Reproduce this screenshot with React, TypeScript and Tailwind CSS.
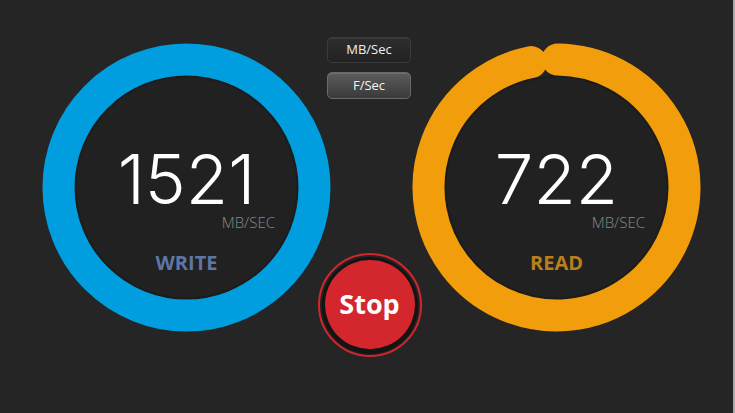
import React from 'react';

type GaugeProps = {
  value: string;
  label: string;
  color: string;
  labelClass: string;
  full?: boolean;
};

const R = 128;
const C = 144.5;

// arc path from angle a0 to a1 (degrees, 0 = top, clockwise)
function arcPath(a0: number, a1: number) {
  const p = (a: number) => {
    const rad = ((a - 90) * Math.PI) / 180;
    return [C + R * Math.cos(rad), C + R * Math.sin(rad)];
  };
  const [x0, y0] = p(a0);
  const [x1, y1] = p(a1);
  const large = a1 - a0 > 180 ? 1 : 0;
  return `M ${x0} ${y0} A ${R} ${R} 0 ${large} 1 ${x1} ${y1}`;
}

function Gauge({ value, label, color, labelClass, full }: GaugeProps) {
  return (
    <div className="relative w-[289px] h-[289px] mt-[6px] flex-shrink-0">
      <svg className="absolute inset-0" width="289" height="289" viewBox="0 0 289 289">
        <circle cx={C} cy={C} r="112" fill="#212121" />
        <circle cx={C} cy={C} r="111" fill="none" stroke="#1c1c1c" strokeWidth="2" />
        {full ? (
          <circle cx={C} cy={C} r={R} fill="none" stroke={color} strokeWidth="32" />
        ) : (
          <path d={arcPath(0.5, 348.5)} fill="none" stroke={color} strokeWidth="32" strokeLinecap="round" />
        )}
      </svg>
      <div className="relative flex flex-col items-center pt-[110px]">
        <div className="text-white text-[69px] leading-[52px] font-light" style={{ fontFamily: 'Inter, "Liberation Sans", sans-serif' }}>
          {value}
        </div>
        <div className="w-full flex justify-end pr-[56px] mt-[10px]">
          <span className="text-[#8a8a8a] text-[15px] leading-none font-light" style={{ fontFamily: '"Open Sans", sans-serif' }}>
            MB/SEC
          </span>
        </div>
        <div className={`mt-[23px] text-[20px] leading-none font-bold ${labelClass}`} style={{ fontFamily: '"Open Sans", sans-serif' }}>
          {label}
        </div>
      </div>
    </div>
  );
}

export default function App() {
  return (
    <div
      className="w-[735px] h-[413px] bg-[#252525] border-r-[2px] border-[#a9a9a9] flex items-start pl-[42px] pt-[37px] overflow-hidden"
      style={{ fontFamily: '"Open Sans", sans-serif' }}
    >
      <Gauge value="1521" label="WRITE" color="#009edf" labelClass="text-[#5e76a6]" full />

      {/* ── Centre controls ── */}
      <div className="w-[81px] flex flex-col items-center flex-shrink-0">
        <button className="w-[84px] h-[26px] -ml-[5px] rounded-[5px] border border-[#3c3c3c] bg-gradient-to-b from-[#2e2e2e] to-[#222] text-[#f0f0f0] text-[13px] font-medium shadow-[inset_0_1px_0_rgba(255,255,255,0.05)]">
          MB/Sec
        </button>
        <button className="w-[84px] h-[27px] -ml-[5px] mt-[9px] rounded-[5px] border border-[#6a6a6a] bg-gradient-to-b from-[#5c5c5c] to-[#3a3a3a] text-[#f4f4f4] text-[13px] font-medium shadow-[inset_0_1px_0_rgba(255,255,255,0.12)]">
          F/Sec
        </button>

        <div className="mt-[154px] -ml-[4px] w-[104px] h-[104px] rounded-full border-[2px] border-[#d3262d] flex items-center justify-center">
          <div className="w-[96px] h-[96px] rounded-full bg-[#141414] flex items-center justify-center shadow-[0_1px_2px_rgba(0,0,0,0.6)]">
            <button className="w-[90px] h-[89px] -mt-[1px] rounded-full bg-[#d4272d] text-white text-[27px] font-bold leading-none flex items-center justify-center pb-[3px]">
              Stop
            </button>
          </div>
        </div>
      </div>

      <Gauge value="722" label="READ" color="#f29d0b" labelClass="text-[#b97f1c]" />
    </div>
  );
}
